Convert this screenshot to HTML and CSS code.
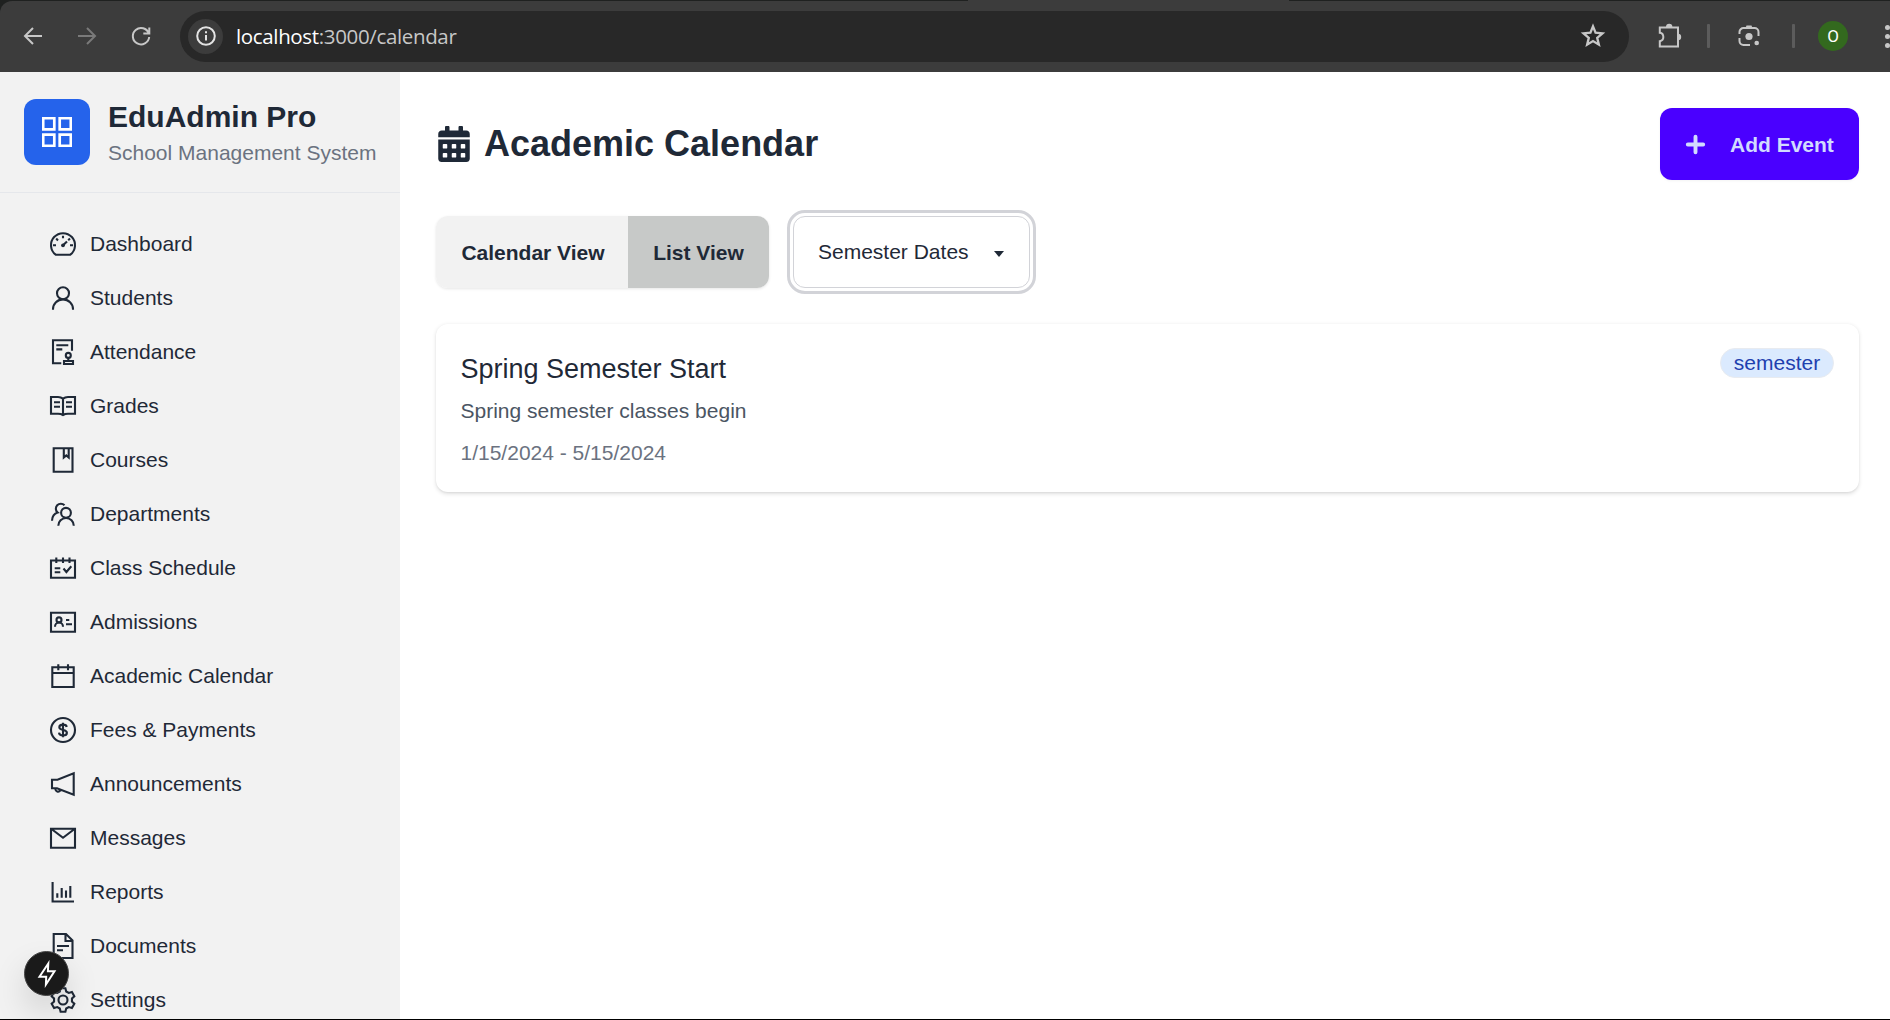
FILE: index.html
```html
<!DOCTYPE html>
<html lang="en">
<head>
<meta charset="utf-8">
<title>EduAdmin Pro - Academic Calendar</title>
<link rel="stylesheet" href="styles.css">
</head>
<body>
<div class="browser">
  <div class="toolbar">
    <svg class="tool back" viewBox="0 0 24 24"><path d="M21 12H4.500M12 4l-8 8 8 8"/></svg>
    <svg class="tool forward" viewBox="0 0 24 24"><path d="M3 12h16.500M12 4l8 8-8 8"/></svg>
    <svg class="tool reload" viewBox="0 0 24 24"><path d="M19.800 9.500A8.200 8.200 0 1 0 20.200 13M20.300 3.500V9.500H14.300"/></svg>
    <div class="omnibox">
      <span class="site-info"><svg viewBox="0 0 24 24"><circle cx="12" cy="12" r="8.800"/><path d="M12 11v5.500M12 7.200v2"/></svg></span>
      <span class="url"><b>localhost</b>:3000/calendar</span>
      <svg class="star" viewBox="0 0 24 24"><path d="M12 3.800l2.200 5.400 5.900.5-4.500 3.900 1.400 5.800L12 16.300l-5 3.100 1.400-5.800L3.900 9.700l5.900-.5z"/></svg>
    </div>
    <svg class="puzzle" viewBox="0 0 28 28"><path d="M4.800 5.500H23V24.500H4.800V19.200C9.500 18.500 9.500 11.500 4.800 10.800Z"/><path class="solid" d="M11 5a3.200 3.200 0 0 1 6.400 0zM23 11.800a3.200 3.200 0 0 1 0 6.400z"/></svg>
    <i class="sep sep-a"></i>
    <svg class="lens" viewBox="0 0 24 24"><path d="M2.500 10V8a4 4 0 0 1 4-4h11a4 4 0 0 1 4 4v4M2.500 14v3a4 4 0 0 0 4 4H13"/><circle class="solid" cx="12" cy="12.500" r="3.600"/><circle class="solid" cx="19.700" cy="19" r="2.300"/><path class="solid" d="M8.500 4l1-2.500h5l1 2.500z"/></svg>
    <i class="sep sep-b"></i>
    <span class="profile">O</span>
    <span class="more"><i></i><i></i><i></i></span>
  </div>
</div>
<div class="app">
  <aside class="sidebar">
    <div class="brand">
      <span class="logo"><svg viewBox="0 0 30 30"><path d="M1.200 1.200h11.100v11.100H1.200zM17.700 1.200h11.100v11.100H17.700zM1.200 17.700h11.100v11.100H1.200zM17.700 17.700h11.100v11.100H17.700z"/></svg></span>
      <div><h1>EduAdmin Pro</h1><p>School Management System</p></div>
    </div>
    <nav>
      <a><svg viewBox="0 0 30 30"><path d="M7.700 25.700A12 12 0 1 1 22.300 25.700ZM15 6.700V9.200M5 16.300H8M22 16.300H25M8.200 9.600 10 11.400M15 16.300 19 12.400M20.200 11.200 22 9.500"/><circle class="dot" cx="15" cy="16.300" r="1.900"/></svg>Dashboard</a>
      <a><svg viewBox="0 0 30 30"><circle cx="15" cy="10.200" r="6"/><path d="M5 26.700V26a10 9.600 0 0 1 20 0v.7"/></svg>Students</a>
      <a><svg viewBox="0 0 30 30"><path d="M13.300 26.300H5V3.300H24V13.700M8.300 8.300H20.300M8.300 12.400H14.300M20.300 21V24M16 24H25V27H16Z"/><circle cx="20.300" cy="18.400" r="2.500"/></svg>Attendance</a>
      <a><svg viewBox="0 0 30 30"><path d="M3 6H10Q13 6 15 7.800Q17 6 20 6H27V22.700H20Q17 22.700 15 24Q13 22.700 10 22.700H3ZM15 7.800V24M6 11.300H12M6 15.700H12M18 11.300H24M18 15.700H24"/></svg>Grades</a>
      <a><svg viewBox="0 0 30 30"><path d="M5.700 3.200H24.500V26.800H5.700ZM15.800 3.200V12.500L18.300 10.400 20.700 12.500V3.200"/></svg>Courses</a>
      <a><svg viewBox="0 0 30 30"><circle cx="18" cy="13.800" r="4.900"/><path d="M10.300 26.700A7.750 7.750 0 0 1 25.800 26.700M16.500 6.300A5 5 0 1 0 9.700 13.600C6 14.700 4.200 17.500 4 21.700"/></svg>Departments</a>
      <a><svg viewBox="0 0 30 30"><path d="M3 7.500H27V24.700H3ZM8.300 4.500V10M15 4.500V10M21.500 4.500V10M6.700 15.300H12.300M6.700 19.300H12.300M15.500 15.500 18.400 19 23.300 13.300"/></svg>Class Schedule</a>
      <a><svg viewBox="0 0 30 30"><path d="M3 5.800H27V24.700H3ZM7 19.800A4 4.300 0 0 1 15 19.800M18 13H21.300M18 17.300H24"/><circle cx="11" cy="12.900" r="2.500"/></svg>Admissions</a>
      <a><svg viewBox="0 0 30 30"><path d="M4.300 6.300H25.700V26H4.300ZM4.300 12H25.700M10.300 3.300V9.300M20 3.300V9.300"/></svg>Academic Calendar</a>
      <a><svg viewBox="0 0 30 30"><circle cx="15" cy="15" r="12"/><path d="M18.700 12C18.500 10.400 17 9.600 15 9.600S11.300 10.500 11.300 12.300C11.300 16 18.900 14 18.900 17.700C18.900 19.500 17.300 20.500 15 20.500S11.200 19.600 11 17.700M15 7.800V22.300"/></svg>Fees &amp; Payments</a>
      <a><svg viewBox="0 0 30 30"><path d="M4 10.700H9.500L25.700 4.200V25.700L9 19.300H4ZM7.500 19.500A2.600 2.600 0 1 0 12.700 20.500"/></svg>Announcements</a>
      <a><svg viewBox="0 0 30 30"><path d="M3 5.700H27V24.700H3ZM3.500 6 15 14.800 26.500 6"/></svg>Messages</a>
      <a><svg viewBox="0 0 30 30"><path d="M4.600 5V24.500H26M9.300 16.300V20.700M13.700 11V20.700M18 13.500V20.700M22.300 9V20.700"/></svg>Reports</a>
      <a><svg viewBox="0 0 30 30"><path d="M5.700 3H18L24.500 9.500V27H5.700ZM17.500 3V10H24.500M9 15H21M9 19.300H15"/></svg>Documents</a>
      <a><svg viewBox="0 0 30 30"><path d="M11.800 6.500 12.600 3.300H17.400L18.200 6.500 20.760 7.980 23.930 7.070 26.330 11.230 23.960 13.520V16.480L26.330 18.770 23.930 22.930 20.760 22.020 18.200 23.500 17.400 26.700H12.600L11.800 23.500 9.240 22.020 6.070 22.930 3.670 18.770 6.040 16.480V13.520L3.670 11.230 6.070 7.070 9.240 7.980Z"/><circle cx="15" cy="15" r="4.500"/></svg>Settings</a>
    </nav>
  </aside>
  <main>
    <header>
      <h2><svg viewBox="0 0 448 512"><path fill-rule="evenodd" d="M0 464c0 26.500 21.500 48 48 48h352c26.500 0 48-21.500 48-48V192H0zM76 256h40q12 0 12 12v40q0 12-12 12H76q-12 0-12-12v-40q0-12 12-12zM204 256h40q12 0 12 12v40q0 12-12 12h-40q-12 0-12-12v-40q0-12 12-12zM332 256h40q12 0 12 12v40q0 12-12 12h-40q-12 0-12-12v-40q0-12 12-12zM76 384h40q12 0 12 12v40q0 12-12 12H76q-12 0-12-12v-40q0-12 12-12zM204 384h40q12 0 12 12v40q0 12-12 12h-40q-12 0-12-12v-40q0-12 12-12zM332 384h40q12 0 12 12v40q0 12-12 12h-40q-12 0-12-12v-40q0-12 12-12zM400 64h-48V16c0-8.800-7.200-16-16-16h-32c-8.800 0-16 7.200-16 16v48H160V16c0-8.800-7.200-16-16-16h-32c-8.800 0-16 7.200-16 16v48H48C21.500 64 0 85.500 0 112v48h448v-48c0-26.500-21.500-48-48-48z"/></svg>Academic Calendar</h2>
      <button class="add"><svg viewBox="0 0 21 21"><path d="M10.500 2.800V18.200M2.800 10.500H18.200"/></svg><span>Add Event</span></button>
    </header>
    <div class="filters">
      <div class="toggle"><button>Calendar View</button><button class="active">List View</button></div>
      <div class="select">Semester Dates<i></i></div>
    </div>
    <article class="card">
      <div>
        <h3>Spring Semester Start</h3>
        <p class="desc">Spring semester classes begin</p>
        <p class="date">1/15/2024 - 5/15/2024</p>
      </div>
      <span class="badge">semester</span>
    </article>
  </main>
</div>
<div class="devtool"><svg viewBox="0 0 24 28"><path d="M13.300 3.500 4.500 16.700H11.200L10.900 24.500 19.500 11.300H12.900Z"/></svg></div>
</body>
</html>
```
FILE: styles.css
```css
* { box-sizing: border-box; margin: 0; padding: 0; }
body {
  width: 1890px; height: 1020px; overflow: hidden; position: relative;
  display: flex; flex-direction: column;
  font: 21px/30px "Liberation Sans", Arial, sans-serif;
  color: #1f2937; background: #fff; border-bottom: 1px solid #000;
}
svg { fill: none; flex: none; }
button { font: inherit; color: inherit; border: 0; }

.browser {
  flex: none; height: 72px; padding-top: 1px;
  background: linear-gradient(90deg, #1f2120 968px, #3c3c3c 968px 1289px, #1f2120 1289px);
}
.toolbar {
  height: 71px; background: #3c3c3c; display: flex; align-items: center;
  padding: 0 0 1px 21px; overflow: hidden; border-top-left-radius: 12px;
}
.toolbar svg { stroke: #c7c7c7; stroke-width: 2; }
.toolbar .solid { fill: #c7c7c7; stroke: none; }
.tool { width: 24px; height: 24px; }
.toolbar .forward { stroke: #7a7a7a; margin-left: 30px; }
.reload { margin-left: 30px; }
.omnibox {
  width: 1449px; height: 51px; margin-left: 27px; border-radius: 26px;
  background: #282828; display: flex; align-items: center; padding: 0 22px 0 8px;
}
.site-info {
  width: 35px; height: 35px; border-radius: 50%; background: #3c3c3c;
  display: grid; place-items: center;
}
.site-info svg { width: 24px; height: 24px; stroke: #e3e3e3; }
.url {
  font: 20.500px/30px "Open Sans", "Noto Sans", sans-serif;
  color: #c7c7c7; margin-left: 13px; flex: 1; letter-spacing: -.35px; padding-bottom: 1px;
}
.url b { font-weight: 400; color: #fff; }
.star { width: 28px; height: 28px; }
.puzzle { width: 28px; height: 28px; margin-left: 26px; }
.sep { width: 3px; height: 24px; background: #5c5c5c; border-radius: 1px; }
.sep-a { margin-left: 24px; }
.lens { width: 24px; height: 24px; margin-left: 27px; }
.sep-b { margin-left: 31px; }
.profile {
  flex: none; width: 30px; height: 30px; border-radius: 50%; background: #33691e;
  margin-left: 23px; color: #fff; display: grid; place-items: center;
  font: 17px/30px Roboto, sans-serif;
}
.more { flex: none; display: grid; gap: 4px; margin-left: 37px; }
.more i { width: 5px; height: 5px; border-radius: 50%; background: #c7c7c7; }

.app { flex: 1; min-height: 0; display: flex; }
.sidebar { width: 400px; background: #f2f2f2; overflow: hidden; }
.brand {
  height: 121px; padding: 24px 24px 24px; border-bottom: 1px solid #e5e7eb;
  display: flex; align-items: center; gap: 18px; white-space: nowrap;
}
.logo {
  width: 66px; height: 66px; flex: none; border-radius: 12px; background: #2563eb;
  display: grid; place-items: center;
}
.logo svg { width: 30px; height: 30px; stroke: #fff; stroke-width: 2.700; }
h1 { font-size: 30px; line-height: 42px; }
.brand p { color: #6b7280; }
nav { padding: 24px 0 0 48px; }
nav a { height: 54px; display: flex; align-items: center; gap: 12px; }
nav svg { width: 30px; height: 30px; stroke: #1f2937; stroke-width: 2.100; }
nav .dot { fill: #1f2937; stroke: none; }

main { flex: 1; padding: 36px 31px 0 36px; }
header { display: flex; justify-content: space-between; align-items: center; height: 72px; }
h2 { display: flex; align-items: center; gap: 12px; font-size: 36px; line-height: 48px; }
h2 svg { width: 36px; height: 36px; fill: #1f2937; }
.add {
  width: 199px; height: 72px; border-radius: 12px; background: #4a00ff; color: #d1dbff;
  font-weight: 700; display: flex; align-items: center; padding-left: 25px; gap: 24px;
  box-shadow: 0 1px 3px rgba(0, 0, 0, .05);
}
.add span { padding-top: 2px; }
.add svg { width: 21px; height: 21px; stroke: #d1dbff; stroke-width: 3.900; stroke-linecap: round; }
.filters { display: flex; gap: 24px; margin-top: 36px; height: 72px; }
.toggle {
  display: flex; border-radius: 12px; overflow: hidden;
  box-shadow: 0 1px 3px rgba(0, 0, 0, .1);
}
.toggle button { width: 192px; background: #f2f2f2; font-weight: 700; padding: 2px 0 0 2px; }
.toggle .active { width: 141px; background: #c7c9c8; padding-left: 0; }
.select {
  width: 237px; border: 1px solid #d2d3d8; border-radius: 12px;
  outline: 3px solid #d2d3d8; outline-offset: 3px;
  display: flex; align-items: center; justify-content: space-between; padding: 0 25px 0 24px;
}
.select i {
  border: 5.500px solid transparent; border-top: 6px solid #1f2937; border-bottom: 0;
  margin-top: 4px;
}
.card {
  margin-top: 36px; height: 168px; padding: 24px 25px 24px 24.500px; border-radius: 12px;
  display: flex; justify-content: space-between; align-items: flex-start;
  box-shadow: 0 1.500px 4px rgba(0, 0, 0, .12), 0 1px 2px rgba(0, 0, 0, .05);
}
h3 { font-size: 27px; line-height: 42px; font-weight: 400; }
.desc { margin-top: 6px; color: #4b5563; }
.date { margin-top: 12px; color: #6b7280; }
.badge {
  width: 114px; height: 30px; border-radius: 15px; border: 1px solid #e8ebf0;
  background: #dbeafe; color: #1e40af; line-height: 28px; text-align: center;
}
.devtool {
  position: absolute; left: 24px; top: 951px; width: 45px; height: 45px;
  border-radius: 50%; background: #1a1a1a; border: 1px solid #454545;
  display: grid; place-items: center;
  box-shadow: 0 16px 36px -4px rgba(0, 0, 0, .2);
}
.devtool svg { width: 24px; height: 28px; stroke: #fff; stroke-width: 2; }
```
